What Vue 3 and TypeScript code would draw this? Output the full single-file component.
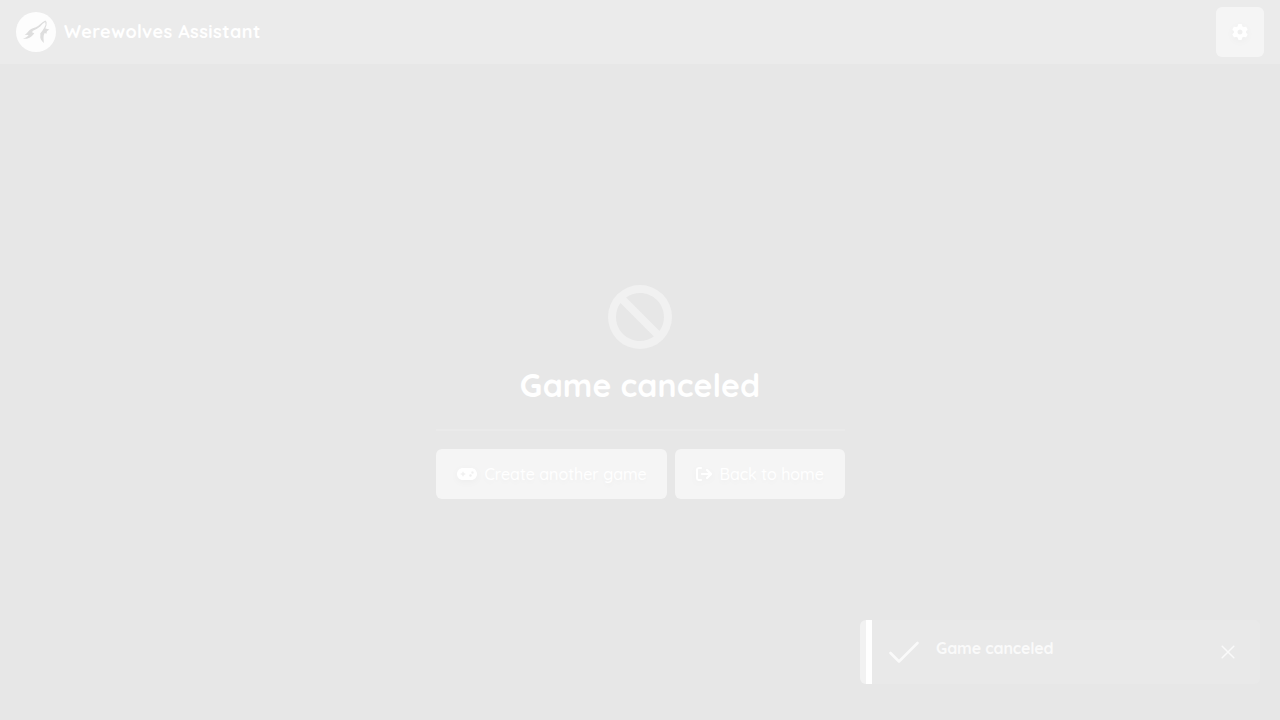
<script setup lang="ts">
import { ref } from 'vue'

const showToast = ref<boolean>(true)
</script>

<template>
  <div class="page">
    <header class="navbar">
      <a class="brand">
        <svg class="logo" viewBox="0 0 40 40">
          <circle cx="20" cy="20" r="20" fill="#fdfdfd" />
          <path
            fill="#dedede"
            d="M7 26.4 C9.5 26 11.4 24.8 12.6 23 L8.7 22.7 C11 21.6 12 19.6 14 17.8 C16 16.1 19 16 22 14 L26.5 10.3 L29.3 8.5 L30.6 10 L30.5 13 L29.3 16.6 L33.4 17.6 L31 19.2 L30.2 22 L29 20.8 C26.8 23.5 27.8 27 27.8 31 C25 28.5 23.6 26 24.4 23.3 L24.2 21.4 L26.2 19 L28.2 15.8 L29.6 12.8 L29.2 10 L26.7 11.8 L24.2 14.5 L21 16.8 L16.5 19 L16.4 20.8 L18.3 20.9 C16 24.6 12.5 27.6 7 26.4 Z"
          />
        </svg>
        <span class="brand-name">Werewolves Assistant</span>
      </a>
      <button class="button settings" type="button" aria-label="Settings">
        <svg class="icon" width="16" height="16" viewBox="0 0 512 512">
          <path d="M495.9 166.6c3.2 8.7 .5 18.4-6.4 24.6l-43.3 39.4c1.1 8.3 1.7 16.8 1.7 25.4s-.6 17.1-1.7 25.4l43.3 39.4c6.9 6.2 9.6 15.9 6.4 24.6c-4.4 11.9-9.7 23.3-15.8 34.3l-4.7 8.1c-6.6 11-14 21.4-22.1 31.2c-5.9 7.2-15.7 9.6-24.5 6.8l-55.7-17.7c-13.4 10.3-28.2 18.9-44 25.4l-12.5 57.1c-2 9.1-9 16.3-18.2 17.8c-13.8 2.3-28 3.5-42.5 3.5s-28.7-1.2-42.5-3.5c-9.2-1.5-16.2-8.7-18.2-17.8l-12.5-57.1c-15.8-6.5-30.6-15.1-44-25.4L83.1 425.9c-8.8 2.8-18.6 .3-24.5-6.8c-8.1-9.8-15.5-20.2-22.1-31.2l-4.7-8.1c-6.1-11-11.4-22.4-15.8-34.3c-3.2-8.7-.5-18.4 6.4-24.6l43.3-39.4C64.6 273.1 64 264.6 64 256s.6-17.1 1.7-25.4L22.4 191.2c-6.9-6.2-9.6-15.9-6.4-24.6c4.4-11.9 9.7-23.3 15.8-34.3l4.7-8.1c6.6-11 14-21.4 22.1-31.2c5.9-7.2 15.7-9.6 24.5-6.8l55.7 17.7c13.4-10.3 28.2-18.9 44-25.4l12.5-57.1c2-9.1 9-16.3 18.2-17.8C227.3 1.2 241.5 0 256 0s28.7 1.2 42.5 3.5c9.2 1.5 16.2 8.7 18.2 17.8l12.5 57.1c15.8 6.5 30.6 15.1 44 25.4l55.7-17.7c8.8-2.8 18.6-.3 24.5 6.8c8.1 9.8 15.5 20.2 22.1 31.2l4.7 8.1c6.1 11 11.4 22.4 15.8 34.3zM256 336a80 80 0 1 0 0-160 80 80 0 1 0 0 160z" />
        </svg>
      </button>
    </header>

    <main class="content">
      <svg class="ban" viewBox="0 0 512 512">
        <path d="M367.2 412.5L99.5 144.8C77.1 176.1 64 214.5 64 256c0 106 86 192 192 192c41.5 0 79.9-13.1 111.2-35.5zm45.3-45.3C434.9 335.9 448 297.5 448 256c0-106-86-192-192-192c-41.5 0-79.9 13.1-111.2 35.5L412.5 367.2zM0 256a256 256 0 1 1 512 0A256 256 0 1 1 0 256z" />
      </svg>
      <h1 class="title">Game canceled</h1>
      <hr class="divider" />
      <div class="actions">
        <button class="button create" type="button">
          <svg class="icon" width="20" height="16" viewBox="0 0 640 512">
            <path d="M192 64C86 64 0 150 0 256S86 448 192 448H448c106 0 192-86 192-192s-86-192-192-192H192zM496 168a40 40 0 1 1 0 80 40 40 0 1 1 0-80zM392 304a40 40 0 1 1 80 0 40 40 0 1 1 -80 0zM168 200c0-13.3 10.7-24 24-24s24 10.7 24 24v32h32c13.3 0 24 10.7 24 24s-10.7 24-24 24H216v32c0 13.3-10.7 24-24 24s-24-10.7-24-24V280H136c-13.3 0-24-10.7-24-24s10.7-24 24-24h32V200z" />
          </svg>
          <span class="label">Create another game</span>
        </button>
        <button class="button home" type="button">
          <svg class="icon" width="16" height="16" viewBox="0 0 512 512">
            <path d="M502.6 278.6c12.5-12.5 12.5-32.8 0-45.3l-128-128c-12.5-12.5-32.8-12.5-45.3 0s-12.5 32.8 0 45.3L402.7 224 192 224c-17.7 0-32 14.3-32 32s14.3 32 32 32l210.7 0-73.4 73.4c-12.5 12.5-12.5 32.8 0 45.3s32.8 12.5 45.3 0l128-128zM160 96c17.7 0 32-14.3 32-32s-14.3-32-32-32L96 32C43 32 0 75 0 128L0 384c0 53 43 96 96 96l64 0c17.7 0 32-14.3 32-32s-14.3-32-32-32l-64 0c-17.7 0-32-14.3-32-32l0-256c0-17.7 14.3-32 32-32l64 0z" />
          </svg>
          <span class="label">Back to home</span>
        </button>
      </div>
    </main>

    <aside v-if="showToast" class="toast">
      <svg class="check" width="32" height="32" viewBox="0 0 32 32">
        <path d="M2.5 17 L11 25.5 L29.5 7" />
      </svg>
      <span class="toast-text">Game canceled</span>
      <button class="close" type="button" aria-label="Close" @click="showToast = false">
        <svg width="14" height="14" viewBox="0 0 14 14">
          <path d="M1.2 1.2 L12.8 12.8 M12.8 1.2 L1.2 12.8" />
        </svg>
      </button>
    </aside>
  </div>
</template>

<style>
body {
  margin: 0;
  background: #e7e7e7;
}
</style>

<style scoped>
.page {
  box-sizing: border-box;
  width: 100%;
  height: 100vh;
  display: flex;
  flex-direction: column;
  overflow: hidden;
  background: #e7e7e7;
  color: #fff;
  font-family: Quicksand, Lato, sans-serif;
}
.navbar {
  box-sizing: border-box;
  height: 64px;
  flex: none;
  padding: 0 16px;
  display: flex;
  align-items: center;
  justify-content: space-between;
  background: #ebebeb;
}
.brand {
  display: flex;
  align-items: center;
  gap: 8px;
}
.logo {
  width: 40px;
  height: 40px;
}
.brand-name {
  font-size: 18px;
  font-weight: 700;
  line-height: 28px;
  letter-spacing: 0.45px;
  white-space: nowrap;
}
.button {
  box-sizing: border-box;
  height: 50px;
  padding: 0 21px;
  border: 0;
  border-radius: 6px;
  display: flex;
  align-items: center;
  gap: 8px;
  background: #f5f5f5;
  color: #fff;
  font-family: inherit;
  font-size: 16px;
}
.settings {
  width: 48px;
  padding: 0;
  justify-content: center;
}
.icon {
  flex: none;
  fill: #fff;
  overflow: visible;
  filter: drop-shadow(0 2px 3px rgba(0, 0, 0, 0.03));
}
.label {
  white-space: nowrap;
  font-weight: 500;
  line-height: 20px;
  text-shadow: 0 3px 5px rgba(0, 0, 0, 0.03);
}
.create {
  width: 231px;
}
.home {
  width: 170px;
}
.content {
  flex: 1;
  display: flex;
  flex-direction: column;
  align-items: center;
  justify-content: center;
}
.ban {
  width: 64px;
  height: 64px;
  fill: #f1f1f1;
}
.title {
  margin: 16px 0 0;
  font-size: 32px;
  font-weight: 700;
  line-height: 40px;
  letter-spacing: 0.12px;
  white-space: nowrap;
}
.divider {
  box-sizing: border-box;
  width: 409px;
  height: 2px;
  margin: 24px 0 18px;
  border: 0;
  background: #eaeaea;
}
.actions {
  display: flex;
  gap: 8px;
}
.toast {
  position: absolute;
  right: 20px;
  bottom: 36px;
  box-sizing: border-box;
  width: 400px;
  height: 64px;
  padding: 16px;
  padding-left: 28px;
  display: flex;
  align-items: flex-start;
  border-radius: 6px;
  background: linear-gradient(90deg, #f2f2f2 6px, #fff 6px, #fff 12px, #e9e9e9 12px);
}
.check {
  flex: none;
  fill: none;
  stroke: #fafafa;
  stroke-width: 2.6;
  stroke-linecap: round;
  stroke-linejoin: round;
}
.toast-text {
  flex: 1;
  margin-left: 16px;
  color: #fafafa;
  font-size: 16px;
  font-weight: 700;
  line-height: 25px;
  letter-spacing: -0.15px;
}
.close {
  width: 32px;
  height: 32px;
  padding: 0;
  border: 0;
  display: flex;
  align-items: center;
  justify-content: center;
  background: transparent;
}
.close path {
  fill: none;
  stroke: #fafafa;
  stroke-width: 1.5;
  stroke-linecap: round;
}
</style>
